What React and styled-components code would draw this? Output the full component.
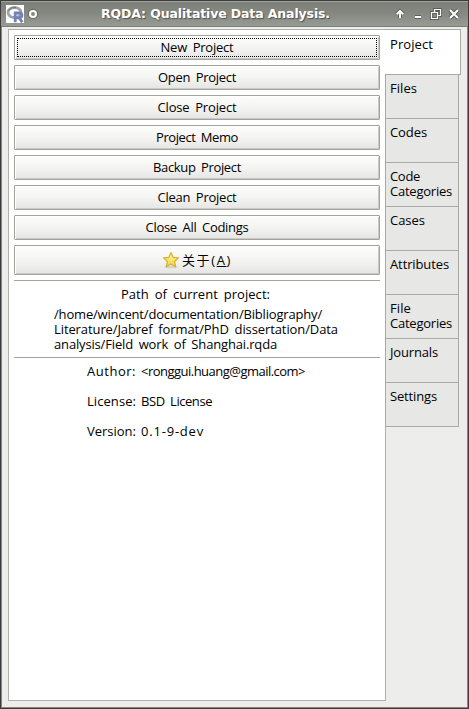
import React, { useLayoutEffect, useRef, useState } from "react";
import styled, { createGlobalStyle } from "styled-components";

const GlobalStyle = createGlobalStyle`
  * { box-sizing: border-box; }
  body { margin: 0; background: #ededeb; overflow: hidden; }
`;

const Window = styled.div`
  display: flex;
  flex-direction: column;
  width: 469px;
  height: 709px;
  border: 1px solid #3c3a3a;
  background: #ededeb;
  color: #000;
  font: 13px/15px "Open Sans", "Noto Sans CJK SC", sans-serif;
  white-space: nowrap;
`;

const TitleBar = styled.header`
  flex: none;
  display: flex;
  align-items: center;
  height: 26px;
  padding: 0 8px 0 5px;
  border-top: 1px solid #a0a29c;
  border-bottom: 1px solid #7b7d77;
  background: linear-gradient(#7d7f79, #858781 45%, #989a94);
`;

const Title = styled.h1`
  flex: 1;
  margin: 0 0 0 64px;
  color: #fff;
  font: bold 12.5px/20px "DejaVu Sans", sans-serif;
  text-shadow: 1px 1px 1px #50524d;
`;

const Ring = styled.span`
  width: 8px;
  height: 8px;
  margin-left: 5px;
  border: 2px solid #fff;
  border-radius: 50%;
  box-shadow: 0 0 1px 1px #62645f;
`;

const Controls = styled.div`
  display: flex;
  gap: 6px;
`;

const Body = styled.div`
  flex: 1;
  display: flex;
  align-items: flex-start;
  padding: 2px 0 0 6px;
  border: solid #858781;
  border-width: 0 1px 1px;
`;

const Page = styled.main`
  flex: none;
  width: 378px;
  height: 672px;
  padding: 5px 5px 0;
  border: 1px solid #b0b1ad;
  background: #fff;
`;

const ButtonList = styled.div`
  display: flex;
  flex-direction: column;
  gap: 5px;
`;

const Button = styled.button`
  display: flex;
  align-items: center;
  justify-content: center;
  gap: ${(p) => (p.$tall ? 2 : 0)}px;
  width: 366px;
  height: ${(p) => (p.$tall ? 30 : 25)}px;
  margin: 0;
  padding: 0;
  border: 1px solid #a3a59d;
  border-radius: 1px;
  background: linear-gradient(#fdfdfc, #f4f4f3 50%, #e5e5e3);
  box-shadow: inset 1px 1px #fff, inset -1px -1px #c9cac5;
  color: #000;
  font: inherit;
  outline: ${(p) => (p.$focused ? "1px dotted #000" : "none")};
  outline-offset: -4px;
`;

const Text = styled.span`
  flex: none;
  word-spacing: ${(p) => p.$gap ?? 2.5}px;
`;

/* A label whose tracking is adjusted so that it takes up `width` pixels. */
function Label({ width, gap, children }) {
  const ref = useRef(null);
  const [tracking, setTracking] = useState(0);
  useLayoutEffect(() => {
    const range = document.createRange();
    range.selectNodeContents(ref.current);
    const natural = range.getBoundingClientRect().width;
    const count = ref.current.textContent.length;
    setTracking((t) => t + (width - natural) / count);
  }, [width]);
  return (
    <Text ref={ref} $gap={gap} style={{ letterSpacing: `${tracking}px` }}>
      {children}
    </Text>
  );
}

const Rule = styled.hr`
  width: 366px;
  height: 1px;
  margin: 0;
  border: 0;
  background: #a3a59d;
`;

const PathTitle = styled.div`
  margin: 6px 0 0 107px;
`;

const PathLines = styled.div`
  display: flex;
  flex-direction: column;
  align-items: flex-start;
  margin: 5px 0 5px 40px;
`;

const Info = styled.dl`
  display: grid;
  grid-template-columns: 46px max-content;
  gap: 15px 8px;
  margin: 6px 0 0 73px;
`;

const Term = styled.dt`
  margin: 0;
`;

const Value = styled.dd`
  margin: 0;
`;

const Tabs = styled.nav`
  flex: none;
  display: flex;
  flex-direction: column;
  margin-left: -1px;
`;

const Tab = styled.div`
  display: flex;
  flex-direction: column;
  align-items: flex-start;
  width: ${(p) => (p.$active ? 76 : 74)}px;
  height: ${(p) => (p.$active ? 46 : 44)}px;
  padding: ${(p) => (p.$active ? "7px 0 0 5px" : "6px 0 0 4px")};
  border: solid #a9aaa6;
  border-width: ${(p) => (p.$active ? "1px 1px 1px 0" : "0 1px 1px 1px")};
  background: ${(p) => (p.$active ? "#fff" : "#e7e7e5")};
`;

const AppLogo = () => (
  <svg width="18" height="18" viewBox="0 0 18 18">
    <rect width="18" height="18" fill="#fff" />
    <ellipse cx="8.5" cy="7.5" rx="6.5" ry="5" fill="none" stroke="#a0a3a2" strokeWidth="2.8" />
    <path d="M2.5 5.5Q5 2 10 2.4" fill="none" stroke="#6d706f" strokeWidth="1" />
    <path
      d="M9.2 17.3V8h4.3a2.4 2.4 0 0 1 0 4.8H9.2m4 0 3 4.5"
      fill="none"
      stroke="#7480b8"
      strokeWidth="2.8"
    />
  </svg>
);

const Star = () => (
  <svg width="18" height="18" viewBox="0 0 18 18">
    <defs>
      <linearGradient id="gold" x2="0" y2="1">
        <stop stopColor="#fff9a8" />
        <stop offset="1" stopColor="#f0d63e" />
      </linearGradient>
    </defs>
    <ellipse cx="9" cy="16" rx="6.5" ry="1.3" fill="#c9c8bd" opacity=".7" />
    <path
      d="M9 1.5 11.2 6.4l5.3.5-4 3.6 1.2 5.3L9 13.1l-4.7 2.7 1.2-5.3-4-3.6 5.3-.5z"
      fill="url(#gold)"
      stroke="#d6b02d"
      strokeWidth="1.2"
      strokeLinejoin="round"
    />
  </svg>
);

const glyphs = [
  "M6 10V3.5M2.8 6.2 6 3l3.2 3.2",
  "M3 9h6",
  "M4.5 5V1.5h6v6H8M1.5 4.5h6v6h-6z",
  "M2 2l8 8M10 2l-8 8",
];

const ControlGlyph = ({ index }) => (
  <svg width="12" height="12" viewBox="0 0 12 12" overflow="visible" fill="none">
    <path d={glyphs[index]} stroke="#5c5e59" strokeWidth={index === 2 ? 3 : 4} />
    <path d={glyphs[index]} stroke="#fff" strokeWidth={index === 2 ? 1.2 : 2} />
  </svg>
);

const actions = [
  ["New Project", 73],
  ["Open Project", 78],
  ["Close Project", 79],
  ["Project Memo", 82],
  ["Backup Project", 88],
  ["Clean Project", 79],
  ["Close All Codings", 103],
];

const pathLines = [
  ["/home/wincent/documentation/Bibliography/", 268],
  ["Literature/Jabref format/PhD dissertation/Data", 284],
  ["analysis/Field work of Shanghai.rqda", 223],
];

const info = [
  ["Author:", 49, "<ronggui.huang@gmail.com>", 164],
  ["License:", 49, "BSD License", 71],
  ["Version:", 49, "0.1-9-dev", 63],
];

const tabs = [
  [["Project", 43]],
  [["Files", 27]],
  [["Codes", 37]],
  [["Code", 30], ["Categories", 62]],
  [["Cases", 35]],
  [["Attributes", 59]],
  [["File", 21], ["Categories", 62]],
  [["Journals", 48]],
  [["Settings", 47]],
];

export default function App() {
  return (
    <>
      <GlobalStyle />
      <Window>
        <TitleBar>
          <AppLogo />
          <Ring />
          <Title>
            <Label width={229} gap={0}>
              RQDA: Qualitative Data Analysis.
            </Label>
          </Title>
          <Controls>
            {glyphs.map((_, i) => (
              <ControlGlyph key={i} index={i} />
            ))}
          </Controls>
        </TitleBar>
        <Body>
          <Page>
            <ButtonList>
              {actions.map(([label, width], i) => (
                <Button key={label} $focused={i === 0}>
                  <Label width={width}>{label}</Label>
                </Button>
              ))}
              <Button $tall>
                <Star />
                <Label width={50}>
                  关于(<u>A</u>)
                </Label>
              </Button>
              <Rule />
            </ButtonList>
            <PathTitle>
              <Label width={149}>Path of current project:</Label>
            </PathTitle>
            <PathLines>
              {pathLines.map(([line, width]) => (
                <Label key={line} width={width}>
                  {line}
                </Label>
              ))}
            </PathLines>
            <Rule />
            <Info>
              {info.map(([name, nameWidth, value, valueWidth]) => (
                <React.Fragment key={name}>
                  <Term>
                    <Label width={nameWidth}>{name}</Label>
                  </Term>
                  <Value>
                    <Label width={valueWidth}>{value}</Label>
                  </Value>
                </React.Fragment>
              ))}
            </Info>
          </Page>
          <Tabs>
            {tabs.map((lines, i) => (
              <Tab key={lines.join(" ")} $active={i === 0}>
                {lines.map(([line, width]) => (
                  <Label key={line} width={width}>
                    {line}
                  </Label>
                ))}
              </Tab>
            ))}
          </Tabs>
        </Body>
      </Window>
    </>
  );
}
